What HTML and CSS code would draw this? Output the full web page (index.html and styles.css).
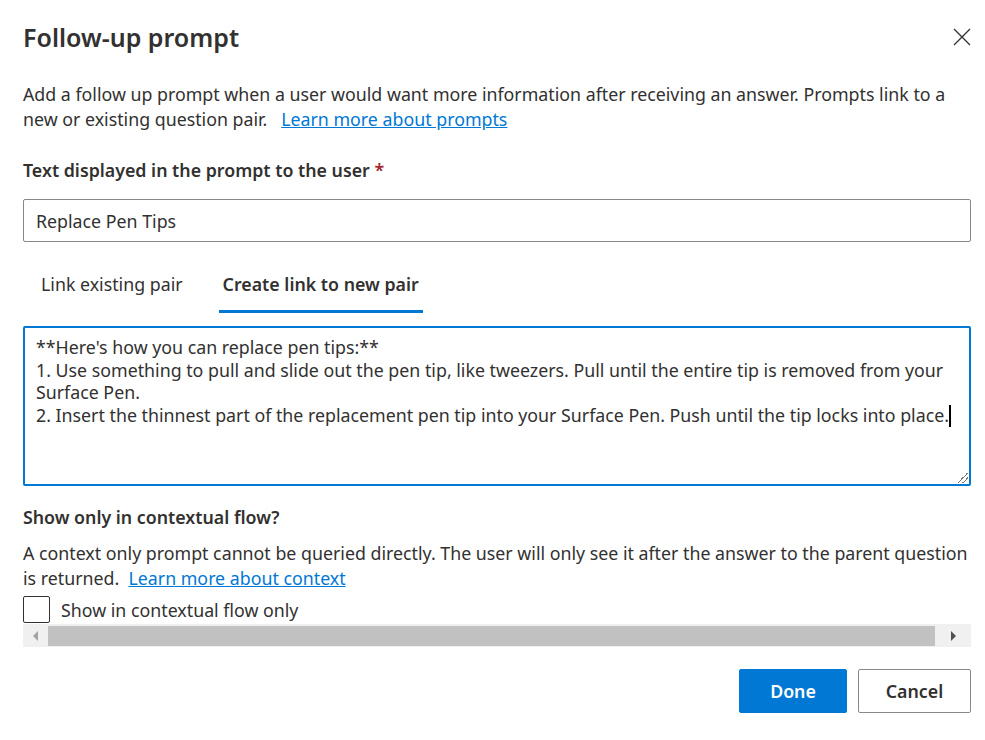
FILE: index.html
```html
<!DOCTYPE html>
<html lang="en">
<head>
    <meta charset="UTF-8">
    <title>Follow-up prompt</title>
    <link rel="stylesheet" href="styles.css">
</head>
<body>
    <div class="dialog">
        <!-- Header -->
        <div class="dialog-header">
            <h1>Follow-up prompt</h1>
            <button class="close-btn" aria-label="Close">
                <svg width="18" height="18" viewBox="0 0 18 18"><path d="M1 1 L17 17 M17 1 L1 17" stroke="#323130" stroke-width="1.3" fill="none"/></svg>
            </button>
        </div>

        <p class="intro">Add a follow up prompt when a user would want more information after receiving an answer. Prompts link to a<br>new or existing question pair. &nbsp; <a href="#">Learn more about prompts</a></p>

        <!-- Prompt text -->
        <label class="field-label">Text displayed in the prompt to the user <span class="required">*</span></label>
        <input class="text-input" type="text" value="Replace Pen Tips">

        <!-- Tabs -->
        <div class="tabs">
            <div class="tab">Link existing pair</div>
            <div class="tab active">Create link to new pair</div>
        </div>

        <div class="answer-box">
            <div class="answer-line">**Here's how you can replace pen tips:**</div>
            <div class="answer-line">1. Use something to pull and slide out the pen tip, like tweezers. Pull until the entire tip is removed from your</div>
            <div class="answer-line">Surface Pen.</div>
            <div class="answer-line">2. Insert the thinnest part of the replacement pen tip into your Surface Pen. Push until the tip locks into place.<span class="caret"></span></div>
            <span class="grip"></span>
        </div>

        <!-- Context -->
        <div class="field-label context-label">Show only in contextual flow?</div>
        <p class="context-text">A context only prompt cannot be queried directly. The user will only see it after the answer to the parent question<br>is returned. &nbsp;<a href="#">Learn more about context</a></p>

        <label class="check-row">
            <span class="checkbox"></span>
            Show in contextual flow only
        </label>

        <div class="hscroll">
            <span class="arrow left"></span>
            <div class="thumb"></div>
            <span class="arrow right"></span>
        </div>

        <!-- Footer -->
        <div class="footer">
            <button class="btn primary">Done</button>
            <button class="btn">Cancel</button>
        </div>
    </div>
</body>
</html>
```

FILE: styles.css
```css
body {
    margin: 0;
    background: #fff;
    font-family: "Segoe UI", "Noto Sans", sans-serif;
    font-size: 17.8px;
    color: #323130;
}
.dialog {
    padding: 0 14px 0 23px;
}
.dialog-header {
    display: flex;
    justify-content: space-between;
    align-items: center;
    height: 77px;
}
h1 {
    font-size: 25px;
    font-weight: 600;
    margin: 0;
    padding-bottom: 4px;
}
.close-btn {
    background: none;
    border: none;
    padding: 0 0 4px;
    cursor: pointer;
    display: flex;
}
.intro {
    margin: 5px 0 0;
    line-height: 25px;
}
a {
    color: #0078d4;
}
.field-label {
    display: block;
    font-weight: 600;
    margin-top: 26px;
    line-height: 24px;
}
.required {
    color: #a4262c;
}
.text-input {
    display: block;
    box-sizing: border-box;
    width: 100%;
    height: 43px;
    margin-top: 17px;
    padding: 0 12px;
    border: 1px solid #8a8886;
    border-radius: 2px;
    font: inherit;
    color: #323130;
}
.tabs {
    display: flex;
    gap: 32px;
    margin-top: 18px;
    padding-left: 14px;
}
.tab {
    padding: 12px 4px 14px;
    border-bottom: 3px solid transparent;
}
.tab.active {
    font-weight: 600;
    border-color: #0078d4;
}
.answer-box {
    position: relative;
    box-sizing: border-box;
    height: 160px;
    margin-top: 13px;
    border: 2px solid #0078d4;
    border-radius: 2px;
    padding: 8px 11px;
    line-height: 22.7px;
}
.answer-line {
    white-space: nowrap;
}
.caret {
    display: inline-block;
    width: 2px;
    height: 22px;
    background: #000;
    vertical-align: -5px;
}
.grip {
    position: absolute;
    right: 1px;
    bottom: 1px;
    width: 10px;
    height: 10px;
    background: linear-gradient(135deg, transparent 45%, #777 45%, #777 52%, transparent 52%, transparent 70%, #777 70%, #777 77%, transparent 77%);
}
.context-label {
    margin-top: 19px;
}
.context-text {
    margin: 12px 0 0;
    line-height: 25px;
}
.check-row {
    display: flex;
    align-items: center;
    gap: 11px;
    margin-top: 5px;
    height: 27px;
}
.checkbox {
    box-sizing: border-box;
    width: 27px;
    height: 27px;
    border: 1px solid #323130;
    border-radius: 2px;
}
.hscroll {
    display: flex;
    align-items: center;
    height: 23px;
    background: #f0f0f0;
    margin-top: 1px;
}
.thumb {
    flex: 1;
    height: 20px;
    background: #c1c1c1;
}
.arrow {
    width: 25px;
    display: flex;
    justify-content: center;
}
.arrow::before {
    content: "";
    border-top: 5px solid transparent;
    border-bottom: 5px solid transparent;
}
.arrow.left::before {
    border-right: 5px solid #a3a3a3;
}
.arrow.right {
    width: 36px;
}
.arrow.right::before {
    border-left: 5px solid #505050;
}
.footer {
    display: flex;
    justify-content: flex-end;
    gap: 11px;
    margin-top: 22px;
}
.btn {
    height: 44px;
    min-width: 113px;
    border: 1px solid #8a8886;
    border-radius: 2px;
    background: #fff;
    color: #323130;
    font: inherit;
    font-weight: 600;
    cursor: pointer;
}
.btn.primary {
    min-width: 108px;
    background: #0078d4;
    border-color: #0078d4;
    color: #fff;
}
```
